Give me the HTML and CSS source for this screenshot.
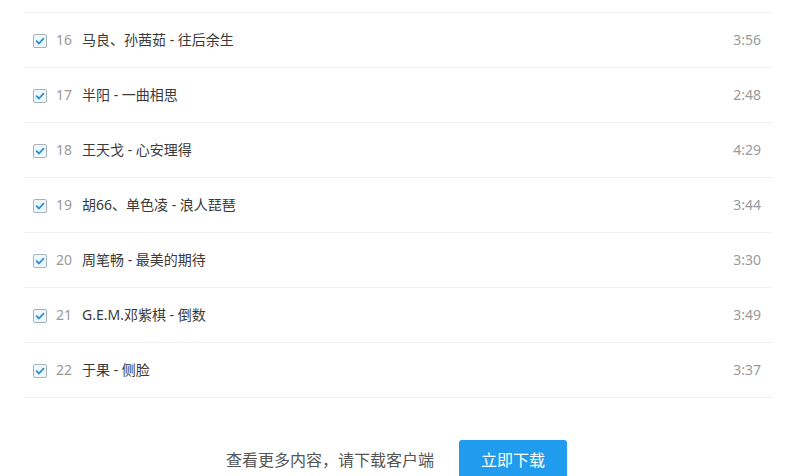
FILE: index.html
```html
<!DOCTYPE html>
<html lang="zh-CN">
<head>
<meta charset="utf-8">
<title>歌单</title>
<link rel="stylesheet" href="styles.css">
</head>
<body>
<div class="page">
  <ul class="songs">
    <li class="song"><span class="cb"><svg viewBox="0 0 14 14" width="14" height="14"><rect x="0.5" y="0.5" width="13" height="13" rx="1.5" fill="#eef7fc" stroke="#a9b3ba"/><path d="M3.6 7.2 L6 9.5 L10.5 4.6" fill="none" stroke="#2b8fd4" stroke-width="1.8" stroke-linecap="round" stroke-linejoin="round"/></svg></span><span class="num">16</span><span class="title">马良、孙茜茹 - 往后余生</span><span class="dur">3:56</span></li>
    <li class="song"><span class="cb"><svg viewBox="0 0 14 14" width="14" height="14"><rect x="0.5" y="0.5" width="13" height="13" rx="1.5" fill="#eef7fc" stroke="#a9b3ba"/><path d="M3.6 7.2 L6 9.5 L10.5 4.6" fill="none" stroke="#2b8fd4" stroke-width="1.8" stroke-linecap="round" stroke-linejoin="round"/></svg></span><span class="num">17</span><span class="title">半阳 - 一曲相思</span><span class="dur">2:48</span></li>
    <li class="song"><span class="cb"><svg viewBox="0 0 14 14" width="14" height="14"><rect x="0.5" y="0.5" width="13" height="13" rx="1.5" fill="#eef7fc" stroke="#a9b3ba"/><path d="M3.6 7.2 L6 9.5 L10.5 4.6" fill="none" stroke="#2b8fd4" stroke-width="1.8" stroke-linecap="round" stroke-linejoin="round"/></svg></span><span class="num">18</span><span class="title">王天戈 - 心安理得</span><span class="dur">4:29</span></li>
    <li class="song"><span class="cb"><svg viewBox="0 0 14 14" width="14" height="14"><rect x="0.5" y="0.5" width="13" height="13" rx="1.5" fill="#eef7fc" stroke="#a9b3ba"/><path d="M3.6 7.2 L6 9.5 L10.5 4.6" fill="none" stroke="#2b8fd4" stroke-width="1.8" stroke-linecap="round" stroke-linejoin="round"/></svg></span><span class="num">19</span><span class="title">胡66、单色凌 - 浪人琵琶</span><span class="dur">3:44</span></li>
    <li class="song"><span class="cb"><svg viewBox="0 0 14 14" width="14" height="14"><rect x="0.5" y="0.5" width="13" height="13" rx="1.5" fill="#eef7fc" stroke="#a9b3ba"/><path d="M3.6 7.2 L6 9.5 L10.5 4.6" fill="none" stroke="#2b8fd4" stroke-width="1.8" stroke-linecap="round" stroke-linejoin="round"/></svg></span><span class="num">20</span><span class="title">周笔畅 - 最美的期待</span><span class="dur">3:30</span></li>
    <li class="song"><span class="cb"><svg viewBox="0 0 14 14" width="14" height="14"><rect x="0.5" y="0.5" width="13" height="13" rx="1.5" fill="#eef7fc" stroke="#a9b3ba"/><path d="M3.6 7.2 L6 9.5 L10.5 4.6" fill="none" stroke="#2b8fd4" stroke-width="1.8" stroke-linecap="round" stroke-linejoin="round"/></svg></span><span class="num">21</span><span class="title">G.E.M.邓紫棋 - 倒数</span><span class="dur">3:49</span></li>
    <li class="song"><span class="cb"><svg viewBox="0 0 14 14" width="14" height="14"><rect x="0.5" y="0.5" width="13" height="13" rx="1.5" fill="#eef7fc" stroke="#a9b3ba"/><path d="M3.6 7.2 L6 9.5 L10.5 4.6" fill="none" stroke="#2b8fd4" stroke-width="1.8" stroke-linecap="round" stroke-linejoin="round"/></svg></span><span class="num">22</span><span class="title">于果 - 侧脸</span><span class="dur">3:37</span></li>
  </ul>
  <div class="more">
    <span class="more-text">查看更多内容，请下载客户端</span>
    <a class="btn" href="#">立即下载</a>
  </div>
</div>
</body>
</html>
```

FILE: styles.css
```css
* { box-sizing: border-box; }
html, body {
  margin: 0;
  padding: 0;
  background: #ffffff;
  overflow: hidden;
}
body {
  font-family: "Noto Sans", "Noto Sans CJK SC", sans-serif;
  color: #333333;
}
.page {
  width: 789px;
  height: 476px;
  padding-top: 12px;
}
.songs {
  list-style: none;
  margin: 0 0 0 24px;
  padding: 0;
  width: 748px;
  border-top: 1px solid #efefef;
}
.song {
  display: flex;
  align-items: center;
  height: 55px;
  border-bottom: 1px solid #efefef;
  padding: 0 11px 2px 9px;
  font-size: 14px;
}
.cb {
  display: flex;
  width: 14px;
  height: 14px;
  margin-right: 9px;
  margin-top: 3px;
}
.num {
  width: 26px;
  color: #9a9a9a;
}
.title {
  flex: 1;
  color: #3a3a3a;
}
.dur {
  color: #9a9a9a;
}
.more {
  display: flex;
  justify-content: center;
  align-items: center;
  gap: 25px;
  margin-top: 42px;
  padding-left: 4px;
}
.more-text {
  font-size: 16px;
  color: #555555;
  padding-bottom: 2px;
}
.btn {
  display: flex;
  align-items: center;
  justify-content: center;
  width: 108px;
  height: 40px;
  border-radius: 3px;
  background: #1f9cee;
  color: #ffffff;
  font-size: 16px;
  text-decoration: none;
  padding-bottom: 2px;
}
```
